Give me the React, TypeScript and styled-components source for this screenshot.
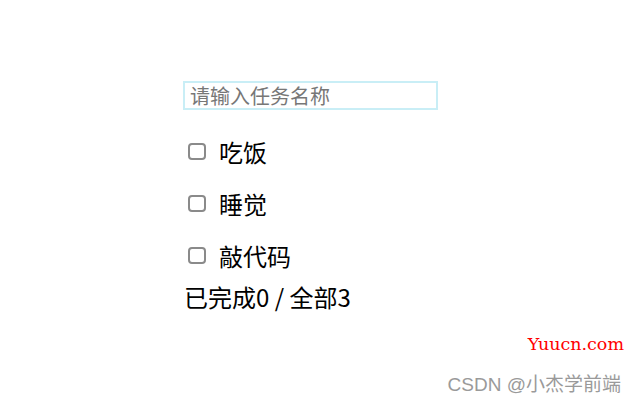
import React from "react";
import styled, { createGlobalStyle } from "styled-components";

const Global = createGlobalStyle`
  html, body { margin: 0; padding: 0; background: #fff; }
  body { font-family: "Noto Sans CJK SC", "Noto Sans", sans-serif; color: #000; }
`;

const Page = styled.div`
  position: relative;
  width: 636px;
  height: 401px;
  overflow: hidden;
  background: #fff;
`;

const Todo = styled.div`
  display: flex;
  flex-direction: column;
  padding: 81px 0 0 183px;
`;

const TaskInput = styled.input`
  box-sizing: border-box;
  width: 255px;
  height: 29px;
  border: 2px solid #c9eef6;
  background: #ffffff;
  padding: 0 5px;
  margin: 0;
  font-family: "Noto Sans CJK SC", sans-serif;
  font-size: 20px;
  outline: none;
  &::placeholder { color: #777; }
`;

const List = styled.ul`
  list-style: none;
  margin: 15px 0 0;
  padding: 0;
`;

const Item = styled.li`
  display: flex;
  align-items: center;
  gap: 13px;
  height: 52px;
  padding-left: 5px;
  font-size: 24px;
`;

const Check = styled.input`
  appearance: none;
  box-sizing: border-box;
  width: 18px;
  height: 17px;
  margin: 0;
  border: 2px solid #8a8a8a;
  border-radius: 4px;
  background: #fff;
`;

const Footer = styled.div`
  font-size: 24px;
  line-height: 32px;
  height: 32px;
  padding-left: 1px;
  white-space: pre;
`;

const Mark = styled.div`
  position: absolute;
  right: 12px;
  top: 334px;
  font-family: "DejaVu Serif", serif;
  font-size: 17.5px;
  color: #f00;
`;

const Credit = styled.div`
  position: absolute;
  right: 15px;
  top: 369px;
  font-family: "Liberation Sans", "Noto Sans CJK SC", sans-serif;
  font-size: 19px;
  color: #9a9a9a;
`;

const tasks = ["吃饭", "睡觉", "敲代码"];

export default function App() {
  return (
    <Page>
      <Global />
      <Todo>
        <TaskInput placeholder="请输入任务名称" />
        <List>
          {tasks.map((t) => (
            <Item key={t}>
              <Check type="checkbox" />
              <span>{t}</span>
            </Item>
          ))}
        </List>
        <Footer>已完成0 / 全部3</Footer>
      </Todo>
      <Mark>Yuucn.com</Mark>
      <Credit>CSDN @小杰学前端</Credit>
    </Page>
  );
}
